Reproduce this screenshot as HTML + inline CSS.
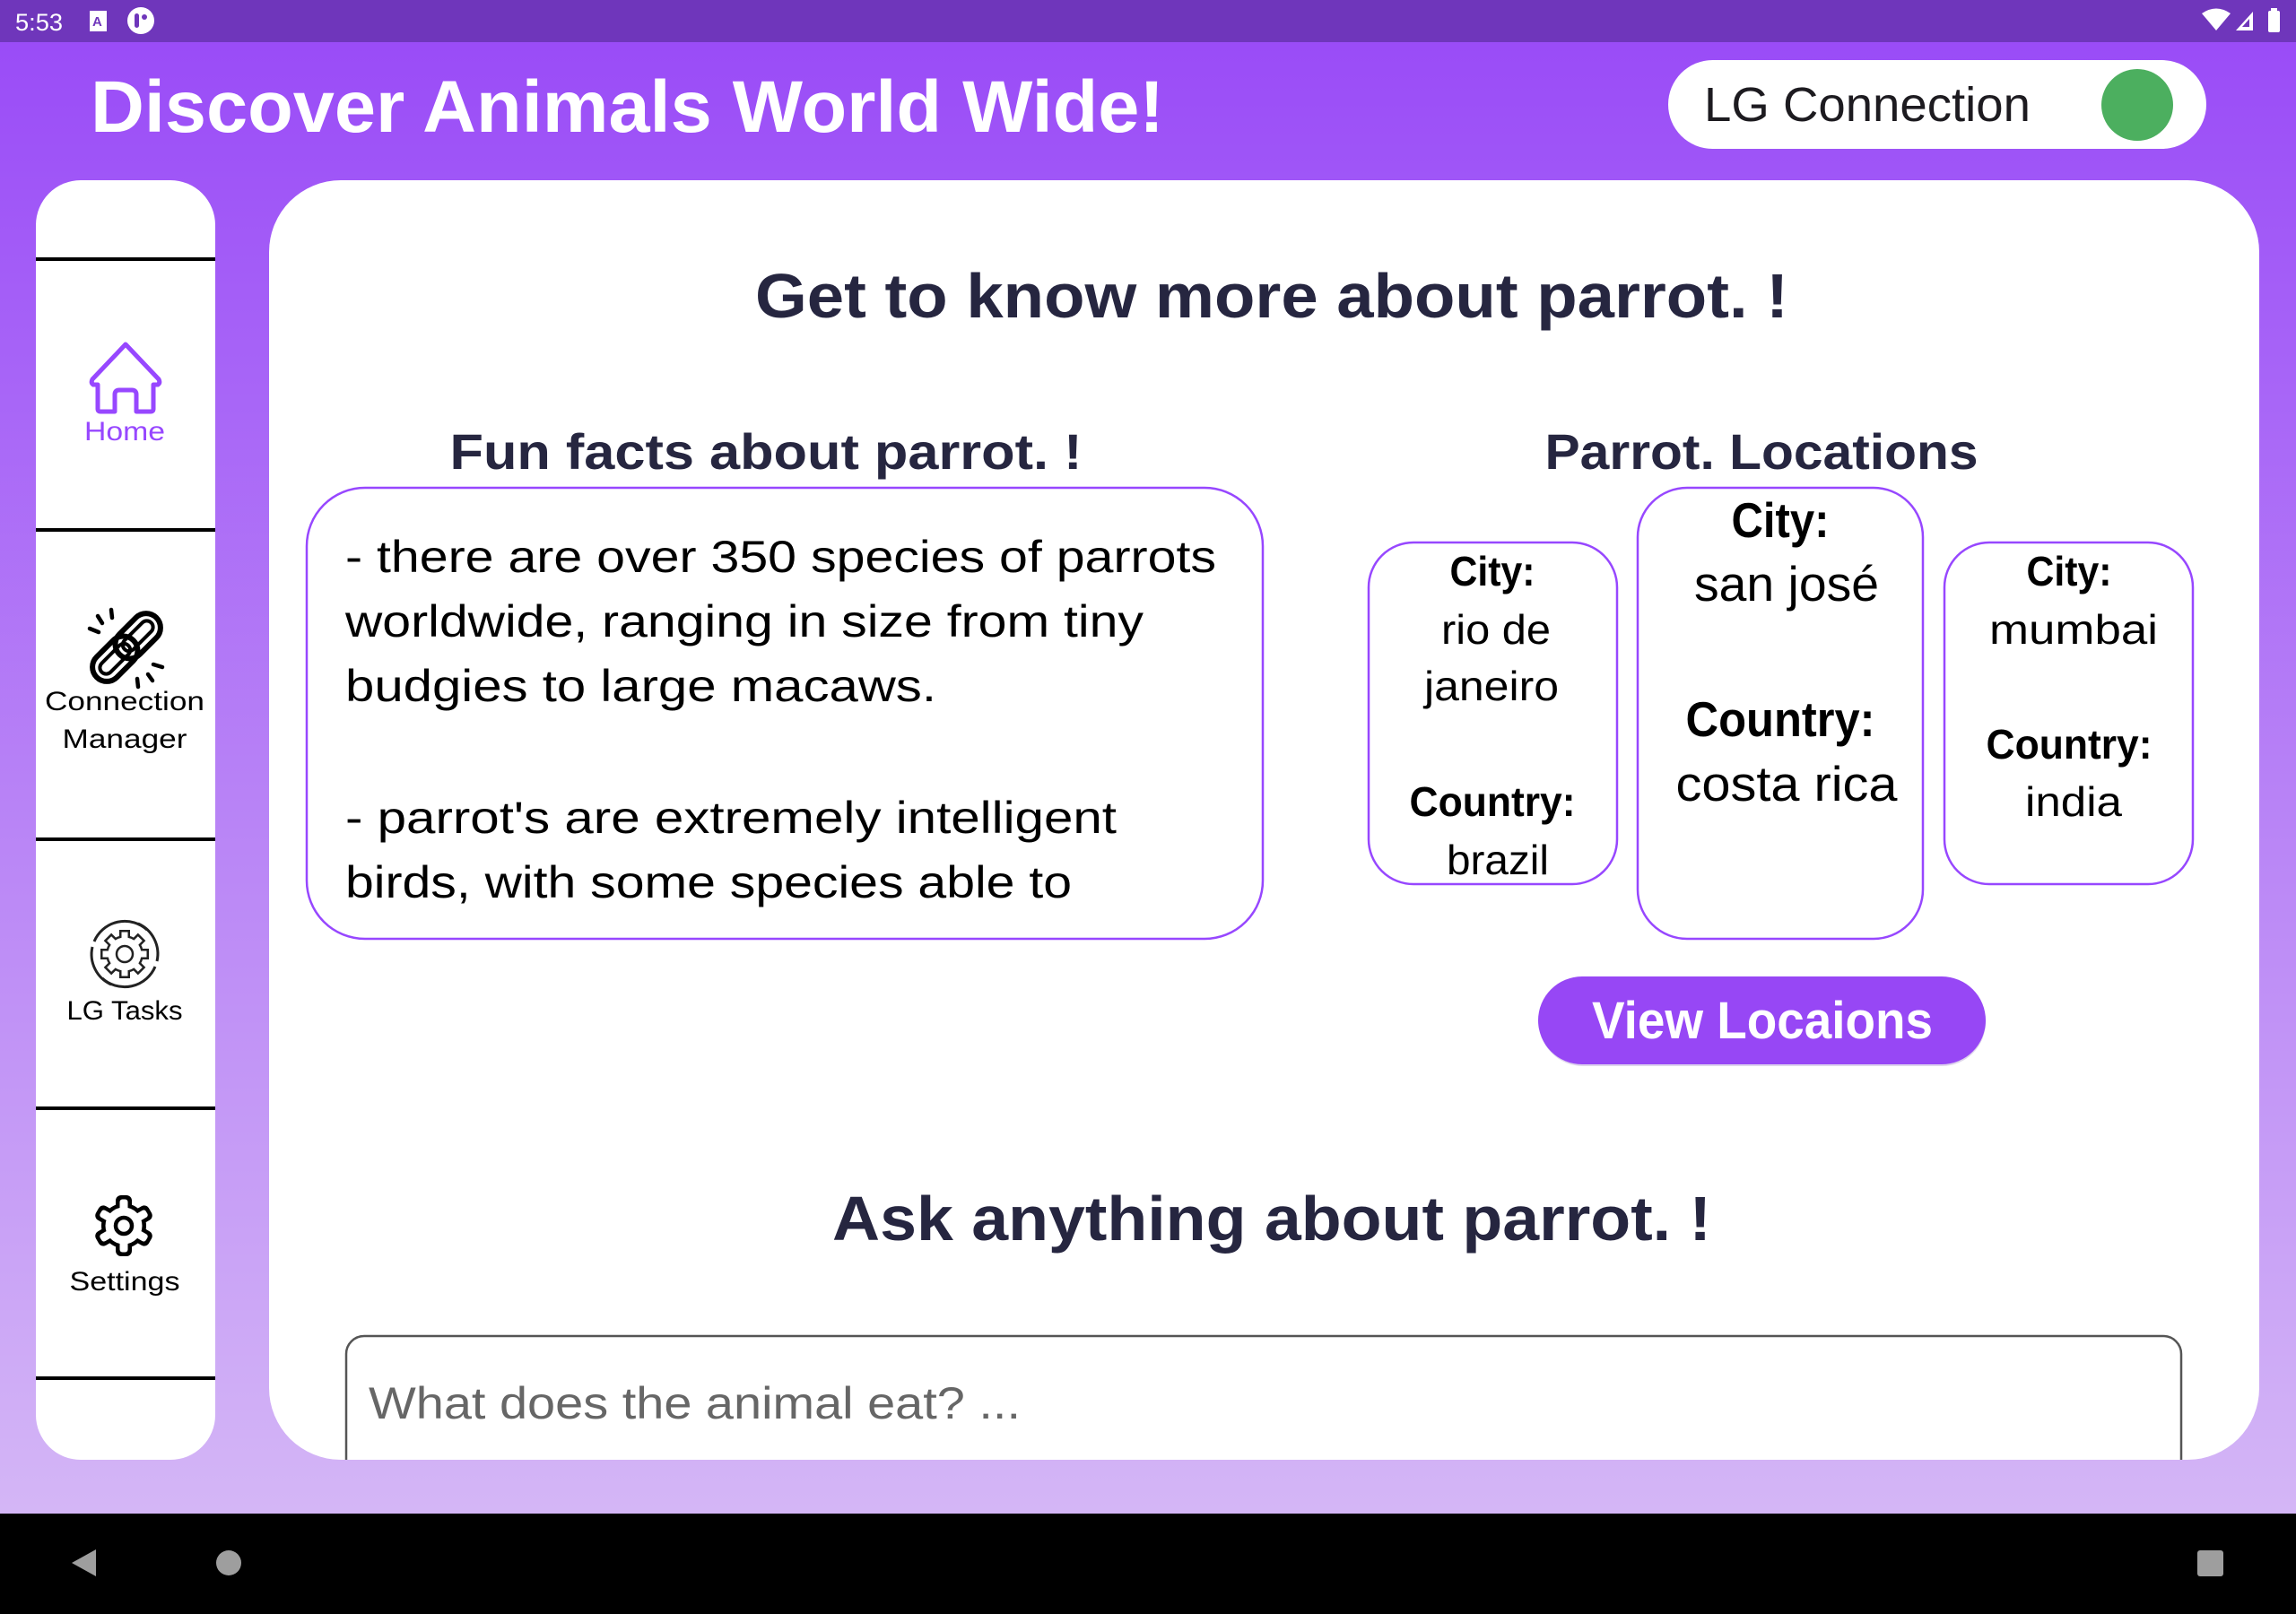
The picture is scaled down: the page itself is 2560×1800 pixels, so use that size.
<!DOCTYPE html>
<html><head><meta charset="utf-8"><style>
html,body{margin:0;padding:0;width:2560px;height:1800px;overflow:hidden;background:#000}
svg{display:block}
text{font-family:"Liberation Sans",sans-serif}
</style></head><body>
<svg width="2560" height="1800" viewBox="0 0 2560 1800" xmlns="http://www.w3.org/2000/svg">
<defs>
<linearGradient id="bg" x1="0" y1="0" x2="0" y2="1">
<stop offset="0" stop-color="#9a4cf7"/>
<stop offset="1" stop-color="#d4b6f6"/>
</linearGradient>
</defs>
<rect x="0" y="47" width="2560" height="1641" fill="url(#bg)"/>
<rect x="0" y="0" width="2560" height="47" fill="#6f36bb"/>
<rect x="0" y="1688" width="2560" height="112" fill="#000"/>

<text x="17" y="34" font-size="27" fill="#fff" textLength="53" lengthAdjust="spacingAndGlyphs">5:53</text>
<rect x="100" y="12" width="19" height="23" fill="#fff"/>
<text x="103" y="29" font-size="15" font-weight="bold" fill="#6f36bb">A</text>
<circle cx="157" cy="23" r="15" fill="#fff"/>
<rect x="150" y="15" width="5" height="16" rx="2.5" fill="#6f36bb"/>
<circle cx="161" cy="19" r="3" fill="#6f36bb"/>
<path d="M2455 15 Q2471 4 2487 15 L2471 34 Z" fill="#fff"/>
<path d="M2493 34 L2512 13 L2512 34 Z" fill="#fff"/>
<path d="M2500 30 L2508 21 L2508 30 Z" fill="#6f36bb"/>
<rect x="2529" y="12" width="13" height="24" rx="2" fill="#fff"/>
<rect x="2532" y="9" width="7" height="4" fill="#fff"/>

<text x="101" y="147" font-size="82" font-weight="bold" fill="#fff" textLength="1197" lengthAdjust="spacingAndGlyphs">Discover Animals World Wide!</text>

<rect x="1860" y="67" width="600" height="99" rx="49.5" fill="#fff"/>
<text x="1900" y="135" font-size="54" fill="#1d1b20" textLength="364" lengthAdjust="spacingAndGlyphs">LG Connection</text>
<circle cx="2383" cy="117" r="40" fill="#4caf5f"/>

<rect x="40" y="201" width="200" height="1427" rx="50" fill="#fff"/>
<g fill="#000">
<rect x="40" y="287" width="200" height="4"/>
<rect x="40" y="589" width="200" height="4"/>
<rect x="40" y="934" width="200" height="4"/>
<rect x="40" y="1234" width="200" height="4"/>
<rect x="40" y="1535" width="200" height="4"/>
</g>
<path d="M140 384 L103 423 Q101 427 104 429 L109 429 L109 456 Q109 459 112 459 L128 459 L128 440 Q128 435 133 435 L147 435 Q152 435 152 440 L152 459 L168 459 Q171 459 171 456 L171 429 L176 429 Q179 427 177 423 Z" fill="none" stroke="#9747ff" stroke-width="5" stroke-linejoin="round"/>
<text x="139" y="491" font-size="30" fill="#9747ff" text-anchor="middle" textLength="90" lengthAdjust="spacingAndGlyphs">Home</text>
<g transform="translate(141 722) rotate(-45)" fill="none" stroke="#000" stroke-width="6">
<rect x="-47" y="-16" width="58" height="32" rx="16"/>
<rect x="-39" y="-7" width="42" height="14" rx="7" stroke-width="4"/>
<rect x="-11" y="-16" width="58" height="32" rx="16"/>
<rect x="-3" y="-7" width="42" height="14" rx="7" stroke-width="4"/>
</g>
<g stroke="#000" stroke-width="4.5" stroke-linecap="round">
<line x1="100" y1="701" x2="110" y2="705"/>
<line x1="109" y1="687" x2="114" y2="695"/>
<line x1="124" y1="680" x2="125" y2="689"/>
<line x1="171" y1="741" x2="181" y2="744"/>
<line x1="165" y1="752" x2="170" y2="759"/>
<line x1="153" y1="757" x2="154" y2="766"/>
</g>
<text x="139" y="792" font-size="30" fill="#000" text-anchor="middle" textLength="178" lengthAdjust="spacingAndGlyphs">Connection</text>
<text x="139" y="834" font-size="30" fill="#000" text-anchor="middle" textLength="139" lengthAdjust="spacingAndGlyphs">Manager</text>
<g transform="translate(139 1064)">
<path d="M-34 -14 A37 37 0 0 1 25 -27" fill="none" stroke="#222" stroke-width="3"/>
<path d="M34 14 A37 37 0 0 1 -25 27" fill="none" stroke="#222" stroke-width="3"/>
<path d="M-36 -8 A37 37 0 0 0 -15 34" fill="none" stroke="#222" stroke-width="3"/>
<path d="M36 8 A37 37 0 0 0 15 -34" fill="none" stroke="#222" stroke-width="3"/>
<g fill="#222">
<rect x="-6" y="-27" width="12" height="54"/>
<rect x="-6" y="-27" width="12" height="54" transform="rotate(45)"/>
<rect x="-6" y="-27" width="12" height="54" transform="rotate(90)"/>
<rect x="-6" y="-27" width="12" height="54" transform="rotate(135)"/>
<circle r="21"/>
</g>
<g fill="#fff">
<rect x="-3.5" y="-24.5" width="7" height="49"/>
<rect x="-3.5" y="-24.5" width="7" height="49" transform="rotate(45)"/>
<rect x="-3.5" y="-24.5" width="7" height="49" transform="rotate(90)"/>
<rect x="-3.5" y="-24.5" width="7" height="49" transform="rotate(135)"/>
<circle r="18.5"/>
</g>
<circle r="9" fill="none" stroke="#222" stroke-width="2.5"/>
</g>
<text x="139" y="1137" font-size="30" fill="#000" text-anchor="middle" textLength="129" lengthAdjust="spacingAndGlyphs">LG Tasks</text>
<g transform="translate(138 1367)">
<g fill="#000">
<rect x="-9" y="-34" width="18" height="68" rx="6"/>
<rect x="-9" y="-34" width="18" height="68" rx="6" transform="rotate(60)"/>
<rect x="-9" y="-34" width="18" height="68" rx="6" transform="rotate(120)"/>
<circle r="25"/>
</g>
<g fill="#fff">
<rect x="-4.5" y="-29.5" width="9" height="59" rx="3"/>
<rect x="-4.5" y="-29.5" width="9" height="59" rx="3" transform="rotate(60)"/>
<rect x="-4.5" y="-29.5" width="9" height="59" rx="3" transform="rotate(120)"/>
<circle r="20.5"/>
</g>
<circle r="9" fill="none" stroke="#000" stroke-width="4.5"/>
</g>
<text x="139" y="1439" font-size="30" fill="#000" text-anchor="middle" textLength="123" lengthAdjust="spacingAndGlyphs">Settings</text>

<rect x="300" y="201" width="2219" height="1427" rx="80" fill="#fff"/>
<text x="1418" y="354" font-size="70" font-weight="bold" fill="#262640" text-anchor="middle" textLength="1152" lengthAdjust="spacingAndGlyphs">Get to know more about parrot. !</text>
<text x="854" y="523" font-size="56" font-weight="bold" fill="#262640" text-anchor="middle" textLength="705" lengthAdjust="spacingAndGlyphs">Fun facts about parrot. !</text>
<text x="1964" y="523" font-size="56" font-weight="bold" fill="#262640" text-anchor="middle" textLength="483" lengthAdjust="spacingAndGlyphs">Parrot. Locations</text>

<rect x="342" y="544" width="1066" height="503" rx="65" fill="none" stroke="#9747ff" stroke-width="2.5"/>
<g font-size="50" fill="#000">
<text x="385" y="638" textLength="971" lengthAdjust="spacingAndGlyphs">- there are over 350 species of parrots</text>
<text x="385" y="710" textLength="890" lengthAdjust="spacingAndGlyphs">worldwide, ranging in size from tiny</text>
<text x="385" y="782" textLength="659" lengthAdjust="spacingAndGlyphs">budgies to large macaws.</text>
<text x="385" y="929" textLength="860" lengthAdjust="spacingAndGlyphs">- parrot's are extremely intelligent</text>
<text x="385" y="1001" textLength="810" lengthAdjust="spacingAndGlyphs">birds, with some species able to</text>
</g>

<rect x="1526" y="605" width="277" height="381" rx="50" fill="none" stroke="#9747ff" stroke-width="2.5"/>
<rect x="1826" y="544" width="318" height="503" rx="55" fill="none" stroke="#9747ff" stroke-width="2.5"/>
<rect x="2168" y="605" width="277" height="381" rx="50" fill="none" stroke="#9747ff" stroke-width="2.5"/>
<g fill="#000" text-anchor="middle">
<text x="1664" y="653" font-size="46" font-weight="bold" textLength="95" lengthAdjust="spacingAndGlyphs">City:</text>
<text x="1668" y="718" font-size="46" textLength="122" lengthAdjust="spacingAndGlyphs">rio de</text>
<text x="1663" y="781" font-size="46" textLength="150" lengthAdjust="spacingAndGlyphs">janeiro</text>
<text x="1664" y="910" font-size="46" font-weight="bold" textLength="185" lengthAdjust="spacingAndGlyphs">Country:</text>
<text x="1670" y="975" font-size="46" textLength="114" lengthAdjust="spacingAndGlyphs">brazil</text>

<text x="1985" y="599" font-size="55" font-weight="bold" textLength="109" lengthAdjust="spacingAndGlyphs">City:</text>
<text x="1992" y="670" font-size="55" textLength="206" lengthAdjust="spacingAndGlyphs">san josé</text>
<text x="1985" y="821" font-size="55" font-weight="bold" textLength="211" lengthAdjust="spacingAndGlyphs">Country:</text>
<text x="1992" y="893" font-size="55" textLength="247" lengthAdjust="spacingAndGlyphs">costa rica</text>

<text x="2307" y="653" font-size="46" font-weight="bold" textLength="95" lengthAdjust="spacingAndGlyphs">City:</text>
<text x="2312" y="718" font-size="46" textLength="188" lengthAdjust="spacingAndGlyphs">mumbai</text>
<text x="2307" y="846" font-size="46" font-weight="bold" textLength="185" lengthAdjust="spacingAndGlyphs">Country:</text>
<text x="2312" y="910" font-size="46" textLength="108" lengthAdjust="spacingAndGlyphs">india</text>
</g>

<rect x="1716" y="1091" width="498" height="98" rx="49" fill="#c8b8e0" opacity="0.6"/>
<rect x="1715" y="1089" width="499" height="98" rx="49" fill="#9747f5"/>
<text x="1965" y="1158" font-size="58" font-weight="bold" fill="#fff" text-anchor="middle" textLength="380" lengthAdjust="spacingAndGlyphs">View Locaions</text>

<text x="1418" y="1383" font-size="70" font-weight="bold" fill="#262640" text-anchor="middle" textLength="980" lengthAdjust="spacingAndGlyphs">Ask anything about parrot. !</text>

<clipPath id="cc"><rect x="300" y="201" width="2219" height="1427"/></clipPath>
<g clip-path="url(#cc)">
<rect x="386" y="1490" width="2046" height="200" rx="20" fill="#fff" stroke="#555" stroke-width="2.5"/>
</g>
<text x="411" y="1582" font-size="50" fill="#666" textLength="727" lengthAdjust="spacingAndGlyphs">What does the animal eat? ...</text>

<path d="M107 1728 L80 1743 L107 1758 Z" fill="#9e9e9e"/>
<circle cx="255" cy="1743" r="14" fill="#9e9e9e"/>
<rect x="2450" y="1729" width="29" height="29" rx="3" fill="#9e9e9e"/>
</svg>
</body></html>
